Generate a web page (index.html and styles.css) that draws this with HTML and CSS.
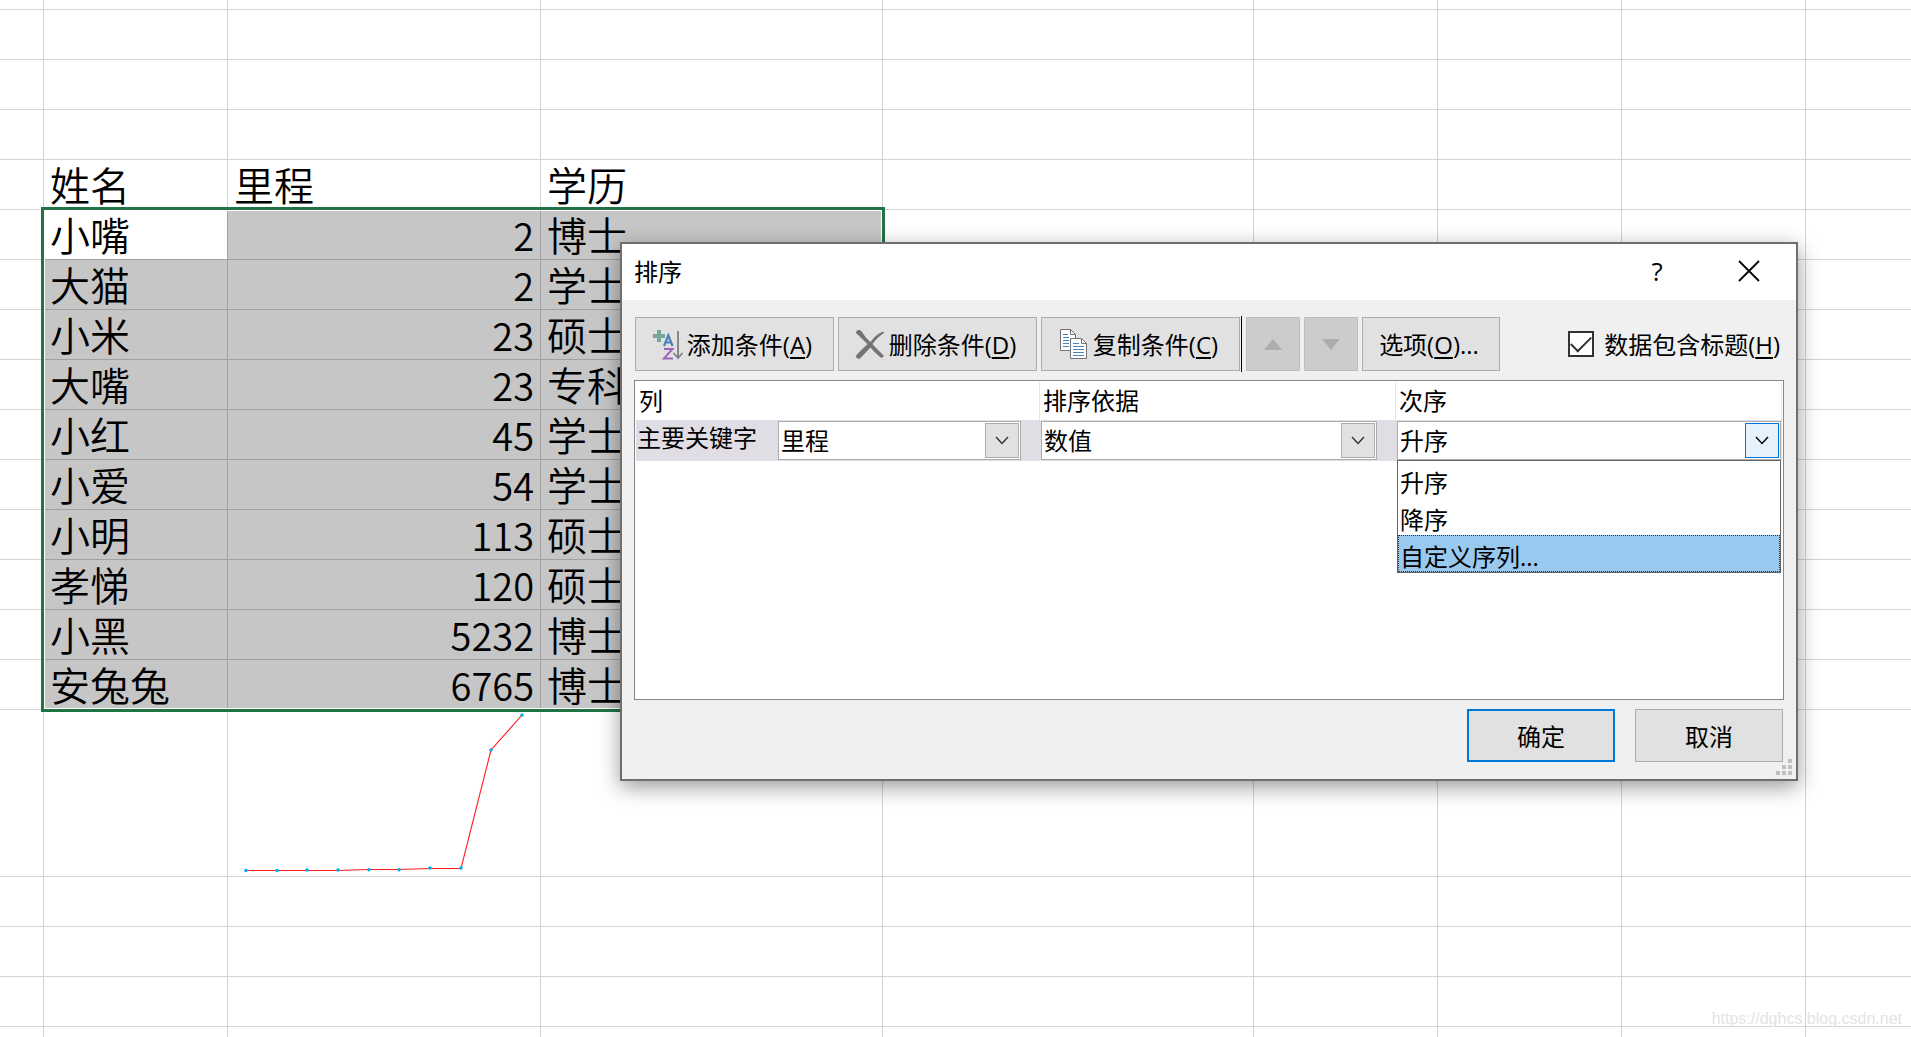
FILE: index.html
```html
<!DOCTYPE html>
<html lang="zh-CN">
<head>
<meta charset="utf-8">
<title>排序</title>
<link rel="stylesheet" href="styles.css">
</head>
<body>
<main class="sheet">
  <table class="grid">
    <colgroup>
      <col class="c-edge"><col class="c-name"><col class="c-miles"><col class="c-degree"><col class="c-wide"><col class="c-std"><col class="c-std"><col class="c-std"><col>
    </colgroup>
    <tbody>
      <tr class="row-cut"><td></td><td></td><td></td><td></td><td></td><td></td><td></td><td></td><td></td></tr>
      <tr><td></td><td></td><td></td><td></td><td></td><td></td><td></td><td></td><td></td></tr>
      <tr><td></td><td></td><td></td><td></td><td></td><td></td><td></td><td></td><td></td></tr>
      <tr><td></td><td></td><td></td><td></td><td></td><td></td><td></td><td></td><td></td></tr>
      <tr><td></td><td>姓名</td><td>里程</td><td>学历</td><td></td><td></td><td></td><td></td><td></td></tr>
      <tr><td></td><td class="sel active">小嘴</td><td class="sel num">2</td><td class="sel">博士</td><td></td><td></td><td></td><td></td><td></td></tr>
      <tr><td></td><td class="sel">大猫</td><td class="sel num">2</td><td class="sel">学士</td><td></td><td></td><td></td><td></td><td></td></tr>
      <tr><td></td><td class="sel">小米</td><td class="sel num">23</td><td class="sel">硕士</td><td></td><td></td><td></td><td></td><td></td></tr>
      <tr><td></td><td class="sel">大嘴</td><td class="sel num">23</td><td class="sel">专科</td><td></td><td></td><td></td><td></td><td></td></tr>
      <tr><td></td><td class="sel">小红</td><td class="sel num">45</td><td class="sel">学士</td><td></td><td></td><td></td><td></td><td></td></tr>
      <tr><td></td><td class="sel">小爱</td><td class="sel num">54</td><td class="sel">学士</td><td></td><td></td><td></td><td></td><td></td></tr>
      <tr><td></td><td class="sel">小明</td><td class="sel num">113</td><td class="sel">硕士</td><td></td><td></td><td></td><td></td><td></td></tr>
      <tr><td></td><td class="sel">孝悌</td><td class="sel num">120</td><td class="sel">硕士</td><td></td><td></td><td></td><td></td><td></td></tr>
      <tr><td></td><td class="sel">小黑</td><td class="sel num">5232</td><td class="sel">博士</td><td></td><td></td><td></td><td></td><td></td></tr>
      <tr><td></td><td class="sel">安兔兔</td><td class="sel num">6765</td><td class="sel">博士</td><td></td><td></td><td></td><td></td><td></td></tr>
      <tr class="row-chart"><td></td><td></td><td class="chart">
        <svg width="312" height="166" viewBox="0 0 312 166" role="img" aria-label="里程">
          <polyline points="18,160.5 49,160.5 79,160.5 110,160.5 141,159.5 171,159.5 202,158.5 233,158.5 263,40 294,5" fill="none" stroke="#ff1c1c" stroke-width="1.1"/>
          <g fill="#00aeef">
            <circle cx="18" cy="160.5" r="1.8"/><circle cx="49" cy="160.5" r="1.8"/><circle cx="79" cy="160" r="1.8"/><circle cx="110" cy="160" r="1.8"/><circle cx="141" cy="159.8" r="1.8"/><circle cx="171" cy="159.8" r="1.8"/><circle cx="202" cy="158" r="1.8"/><circle cx="233" cy="158" r="1.8"/><circle cx="263" cy="40" r="1.8"/><circle cx="294" cy="5" r="1.8"/>
          </g>
        </svg></td><td></td><td></td><td></td><td></td><td></td><td></td></tr>
      <tr><td></td><td></td><td></td><td></td><td></td><td></td><td></td><td></td><td></td></tr>
      <tr><td></td><td></td><td></td><td></td><td></td><td></td><td></td><td></td><td></td></tr>
      <tr><td></td><td></td><td></td><td></td><td></td><td></td><td></td><td></td><td></td></tr>
      <tr><td></td><td></td><td></td><td></td><td></td><td></td><td></td><td></td><td></td></tr>
    </tbody>
  </table>
  <div class="selection"></div>

  <section class="dialog" role="dialog" aria-labelledby="dialog-title">
    <header class="titlebar">
      <h1 id="dialog-title">排序</h1>
      <button class="caption-btn help" type="button" aria-label="帮助">?</button>
      <button class="caption-btn" type="button" aria-label="关闭">
        <svg width="22" height="22" viewBox="0 0 22 22"><path d="M1 1 21 21M21 1 1 21" stroke="#000" stroke-width="1.8" fill="none"/></svg>
      </button>
    </header>

    <div class="toolbar">
      <button class="btn tool" type="button">
        <svg width="30" height="34" viewBox="0 0 30 34">
          <path d="M0 7h4V3h4v4h4v4H8v4H4v-4H0z" fill="#76a797"/>
          <path d="M11 19 15.3 8.5 19.6 19M12.5 15.5h5.8" fill="none" stroke="#4a82bd" stroke-width="2.2"/>
          <path d="M11 22h8.5L11 31.4h9" fill="none" stroke="#9b63ba" stroke-width="2"/>
          <path d="M25 4v26M20.5 26l4.500 5 4.500-5" fill="none" stroke="#808080" stroke-width="1.8"/>
        </svg>
        <span>添加条件(<u>A</u>)</span>
      </button>
      <button class="btn tool" type="button">
        <svg width="30" height="34" viewBox="0 0 30 34"><path d="M1 6C1 2.500 5 2 7 5c2.500 4 5 7 8.500 10C19 10.500 23 6 28.500 4.500L29 6C24 9 20.500 13 17.500 17c4 4.500 7.500 8 11.500 12l-2.500 2c-4-3-7.500-6.500-11-10.500C12 24 8.500 28 5 31.500c-1.500 1.200-5-.8-3.800-3C4.500 24.500 9 20.500 12.500 17 8.500 13 5 10 1 6z" fill="#737373"/></svg>
        <span>删除条件(<u>D</u>)</span>
      </button>
      <button class="btn tool" type="button">
        <svg width="30" height="34" viewBox="0 0 30 34">
          <path d="M1.500 2.500h10l5 5v16h-15z" fill="#fff" stroke="#737373"/>
          <path d="M11.500 2.500v5h5" fill="none" stroke="#737373"/>
          <path d="M4 7.500h5M4 10.500h6M4 13.500h6M4 16.500h6M4 19.500h6" stroke="#4a82bd"/>
          <path d="M11.500 11.500h11l5 5v15h-16z" fill="#fff" stroke="#737373"/>
          <path d="M22.500 11.500v5h5" fill="none" stroke="#737373"/>
          <path d="M14 16.500h6M14 19.500h11M14 22.500h11M14 25.500h11M14 28.500h11" stroke="#4a82bd"/>
        </svg>
        <span>复制条件(<u>C</u>)</span>
      </button>
      <span class="divider"></span>
      <button class="btn arrow" type="button" disabled aria-label="上移"><svg width="18" height="11" viewBox="0 0 18 11"><path d="M0 11 9 0l9 11z" fill="#adadad"/></svg></button>
      <button class="btn arrow" type="button" disabled aria-label="下移"><svg width="18" height="11" viewBox="0 0 18 11"><path d="M0 0h18L9 11z" fill="#adadad"/></svg></button>
      <button class="btn options" type="button"><span>选项(<u>O</u>)...</span></button>
      <label class="check"><input type="checkbox" checked><span>数据包含标题(<u>H</u>)</span></label>
    </div>

    <div class="levels">
      <table class="level-table">
        <colgroup><col class="l-col"><col class="l-by"><col></colgroup>
        <thead><tr><th>列</th><th>排序依据</th><th>次序</th></tr></thead>
        <tbody><tr>
          <td><div class="key">
            <label for="key">主要关键字</label>
            <div class="combo combo-key">
              <select id="key"><option>里程</option></select>
              <span class="drop"><svg width="14" height="9" viewBox="0 0 14 9"><path d="M1 1l6 6.500L13 1" fill="none" stroke="#333" stroke-width="1.400"/></svg></span>
            </div>
          </div></td>
          <td><div class="combo combo-by">
            <select aria-label="排序依据"><option>数值</option></select>
            <span class="drop"><svg width="14" height="9" viewBox="0 0 14 9"><path d="M1 1l6 6.500L13 1" fill="none" stroke="#333" stroke-width="1.400"/></svg></span>
          </div></td>
          <td><div class="combo combo-order">
            <select aria-label="次序"><option>升序</option><option>降序</option><option>自定义序列...</option></select>
            <span class="drop hot"><svg width="14" height="9" viewBox="0 0 14 9"><path d="M1 1l6 6.500L13 1" fill="none" stroke="#000" stroke-width="1.400"/></svg></span>
            <ul class="menu" role="listbox" aria-label="次序">
              <li role="option">升序</li>
              <li role="option">降序</li>
              <li role="option" class="picked" aria-selected="true">自定义序列...</li>
            </ul>
          </div></td>
        </tr></tbody>
      </table>
    </div>

    <footer class="actions">
      <button class="btn action default" type="button">确定</button>
      <button class="btn action" type="button">取消</button>
    </footer>
    <svg class="grip" width="16" height="16" viewBox="0 0 16 16"><path d="M12 0h4v4h-4zM6 6h4v4H6zM12 6h4v4h-4zM0 12h4v4H0zM6 12h4v4H6zM12 12h4v4h-4z" fill="#bfbfbf"/></svg>
  </section>
  <a class="watermark" href="https://dghcs.blog.csdn.net">https://dghcs.blog.csdn.net</a>
</main>
</body>
</html>
```
FILE: styles.css
```css
* { box-sizing: border-box; }

body {
  margin: 0;
  background: #fff;
  color: #000;
  font-family: "Open Sans", "Noto Sans CJK SC", sans-serif;
  font-size: 24px;
}

.sheet {
  position: relative;
  height: 100vh;
  overflow: hidden;
}

/* Worksheet grid */
.grid {
  width: 100%;
  table-layout: fixed;
  border-collapse: separate;
  border-spacing: 0;
  font-family: Lato, "Noto Sans CJK SC", sans-serif;
  font-size: 40px;
  font-weight: 350;
}
.c-edge { width: 44px; }
.c-name, .c-std { width: 184px; }
.c-miles { width: 313px; }
.c-degree { width: 342px; }
.c-wide { width: 371px; }

.grid tr { height: 50px; }
.grid .row-cut { height: 10px; }
.grid .row-chart { height: 167px; }
.grid td {
  padding: 3px 6px 0;
  border: solid #d4d4d4;
  border-width: 0 1px 1px 0;
  line-height: 46px;
  white-space: nowrap;
}
.grid .row-cut td { padding: 0; line-height: 0; }
.grid td:last-child { border-right: 0; }
.grid .chart { padding: 0; line-height: 0; }
.grid .sel { background: #c6c6c6; border-color: #a0a0a0; }
.grid .active { background: #fff; }
.grid .num {
  padding-top: 1px;
  font-family: "Noto Sans CJK SC", sans-serif;
  font-size: 38px;
  text-align: right;
}

/* Frame over the selected range */
.selection {
  position: absolute;
  left: 41px;
  top: 207px;
  width: 844px;
  height: 505px;
  border: 3px solid #217346;
  box-shadow: inset 0 0 0 1px #fff;
}

/* Sort dialog */
.dialog {
  position: absolute;
  left: 620px;
  top: 242px;
  width: 1178px;
  border: 2px solid #6e6e6e;
  background: #f0f0f0;
  box-shadow: 0 6px 20px rgba(0, 0, 0, .4);
}
.titlebar {
  display: flex;
  align-items: center;
  height: 56px;
  padding: 0 1px 3px 12px;
  background: #fff;
}
.titlebar h1 { flex: 1; margin: 0; font-size: 24px; font-weight: 400; }
.caption-btn {
  display: flex;
  align-items: center;
  justify-content: center;
  width: 92px;
  height: 53px;
  padding: 0;
  border: 0;
  background: none;
  color: #000;
  font: inherit;
}
.help { font-size: 26px; }

.toolbar {
  display: flex;
  align-items: center;
  gap: 4px;
  padding: 16px 14px 8px 13px;
}
.btn {
  display: flex;
  align-items: center;
  justify-content: center;
  height: 54px;
  padding: 0;
  border: 1px solid #adadad;
  background: #e1e1e1;
  color: #000;
  font: inherit;
  white-space: nowrap;
}
.btn u, .check u { text-decoration-thickness: 2px; text-underline-offset: 3px; }
.btn span, .check span { padding-bottom: 2px; }
.tool { width: 199px; gap: 4px; padding-right: 4px; }
.divider { width: 1px; height: 56px; margin-left: -3px; background: #000; }
.arrow { width: 54px; border-color: #bfbfbf; background: #ccc; }
.options { width: 138px; padding-right: 4px; }
.check {
  display: flex;
  align-items: center;
  gap: 10px;
  margin-left: auto;
  padding-right: 2px;
  white-space: nowrap;
}
.check input {
  appearance: none;
  width: 26px;
  height: 26px;
  margin: 0;
  border: 2px solid #333;
  background: #fff;
  display: grid;
  place-items: center;
}
.check input:checked::before {
  content: "";
  width: 18px;
  height: 9px;
  margin-top: -6px;
  border: solid #333;
  border-width: 0 0 2px 2px;
  transform: rotate(-45deg);
}

.levels {
  height: 320px;
  margin: 0 12px;
  padding: 1px;
  border: 1px solid #828790;
  background: #fff;
}
.level-table {
  width: 100%;
  table-layout: fixed;
  border-collapse: separate;
  border-spacing: 0;
}
.l-col { width: 404px; }
.l-by { width: 356px; }
.level-table th {
  height: 38px;
  padding: 0 3px;
  border-right: 1px solid #e5e5e5;
  font-weight: 400;
  line-height: 36px;
  text-align: left;
}
.level-table td { height: 41px; padding: 0 1px; background: #e0dee4; }
.key { display: flex; justify-content: space-between; padding-right: 18px; }
.key label { line-height: 34px; }
.combo { position: relative; height: 39px; }
.combo-key { width: 243px; }
.combo-by { width: 336px; }
.combo select {
  appearance: none;
  width: 100%;
  height: 39px;
  padding: 0 2px;
  border: 1px solid #adadad;
  border-radius: 0;
  background: #fff;
  color: #000;
  font: inherit;
}
.drop {
  position: absolute;
  top: 2px;
  right: 2px;
  display: grid;
  place-items: center;
  width: 34px;
  height: 35px;
  border: 1px solid #adadad;
  background: #e1e1e1;
  pointer-events: none;
}
.drop.hot { border-color: #0078d7; background: #e5f1fb; }
.menu {
  position: absolute;
  top: 39px;
  left: 0;
  right: 0;
  margin: 0;
  padding: 0;
  border: 1px solid #646464;
  background: #fff;
  list-style: none;
}
.menu li { height: 37px; padding: 6px 2px 0; line-height: 31px; }
.menu .picked { background: #99c9ef; outline: 1px dotted #333; outline-offset: -1px; }

.actions {
  display: flex;
  justify-content: flex-end;
  gap: 20px;
  padding: 9px 13px 17px;
}
.action { width: 148px; height: 53px; }
.default { border: 2px solid #0078d7; }
.grip { position: absolute; right: 4px; bottom: 4px; }

.watermark {
  position: absolute;
  right: 9px;
  bottom: 9px;
  color: #e4e4e4;
  font-family: "Liberation Sans", sans-serif;
  font-size: 16px;
  text-decoration: none;
}
```
